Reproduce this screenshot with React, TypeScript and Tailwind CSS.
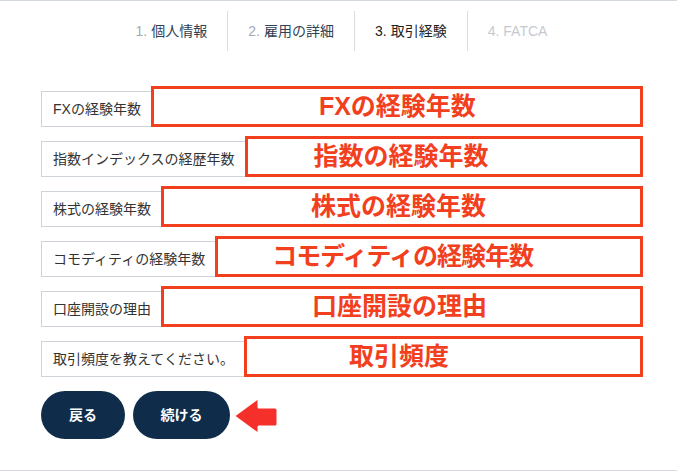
const font = { fontFamily: '"Liberation Sans", "Noto Sans CJK JP", sans-serif' };

const steps = [
  { num: '1.', label: '個人情報', numColor: 'text-[#a3abb4]', labelColor: 'text-[#2f4256]' },
  { num: '2.', label: '雇用の詳細', numColor: 'text-[#a3abb4]', labelColor: 'text-[#2f4256]' },
  { num: '3.', label: '取引経験', numColor: 'text-[#222222]', labelColor: 'text-[#222222]' },
  { num: '4.', label: 'FATCA', numColor: 'text-[#c6cad0]', labelColor: 'text-[#c6cad0]' },
];

// the red notes are hand-placed annotations, not centred in their boxes
const rows = [
  { label: 'FXの経験年数', note: 'FXの経験年数', pad: 'pl-[165px]' },
  { label: '指数インデックスの経歴年数', note: '指数の経験年数', pad: 'pl-[66px]' },
  { label: '株式の経験年数', note: '株式の経験年数', pad: 'pl-[147px]' },
  { label: 'コモディティの経験年数', note: 'コモディティの経験年数', pad: 'pl-[54px] tracking-[-1px]' },
  { label: '口座開設の理由', note: '口座開設の理由', pad: 'pl-[148px]' },
  { label: '取引頻度を教えてください。', note: '取引頻度', pad: 'pl-[102px]' },
];

export default function App() {
  return (
    <div
      style={font}
      className="w-[677px] h-[471px] bg-white border-t border-b border-[#d4d8df] overflow-hidden"
    >
      <nav className="flex justify-center pt-[10px] pl-[6px]">
        {steps.map((s, i) => (
          <div
            key={s.num}
            className={`h-10 flex items-center px-5 text-[14px] ${i > 0 ? 'border-l border-[#d9dce1]' : ''}`}
          >
            <span className={`${s.numColor} mr-1`}>{s.num}</span>
            <span className={s.labelColor}>{s.label}</span>
          </div>
        ))}
      </nav>

      <div className="pl-[41px] mt-[35px] flex flex-col gap-[9px]">
        {rows.map((r) => (
          <div key={r.label} className="flex items-end h-[41px] w-[602px]">
            <div className="h-[36px] shrink-0 flex items-center px-[11px] border border-[#cfd3da] text-[14px] text-[#333333] whitespace-nowrap">
              {r.label}
            </div>
            <div
              className={`flex-1 -ml-[2px] h-[41px] border-[3px] border-[#f2401e] flex items-center ${r.pad} text-[#f2401e] text-[25px] font-bold whitespace-nowrap`}
            >
              {r.note}
            </div>
          </div>
        ))}

        <div className="relative flex gap-2 mt-[5px]">
          <button className="w-[84px] h-12 rounded-full bg-[#0f2d4a] text-white text-[14px] font-semibold">
            戻る
          </button>
          <button className="w-[97px] h-12 rounded-full bg-[#0f2d4a] text-white text-[14px] font-semibold">
            続ける
          </button>
          <svg
            className="absolute left-[189px] top-[3px]"
            width="50"
            height="44"
            viewBox="0 0 50 44"
          >
            <path
              d="M3 22 L29 3 L29 13 L45 13 Q48 13 48 16 L48 30 Q48 33 45 33 L29 33 L29 41 Z"
              fill="#f5302a"
              stroke="#ffffff"
              strokeWidth="3"
              strokeLinejoin="round"
            />
          </svg>
        </div>
      </div>
    </div>
  );
}
